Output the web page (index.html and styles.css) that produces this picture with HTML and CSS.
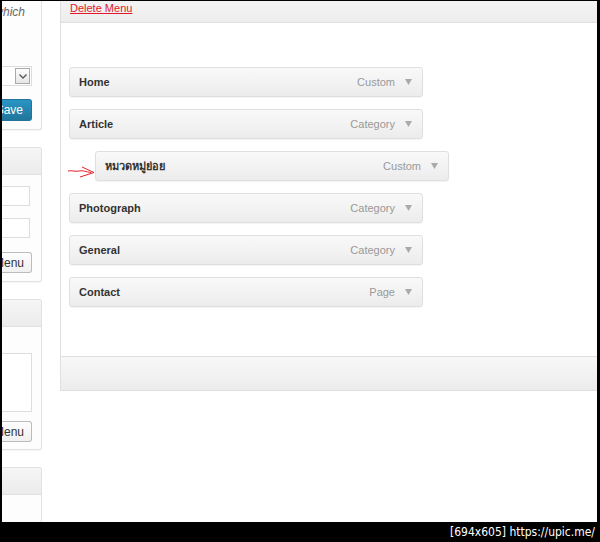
FILE: index.html
```html
<!DOCTYPE html>
<html lang="en">
<head>
    <meta charset="UTF-8">
    <meta name="viewport" content="width=device-width, initial-scale=1.0">
    <title>Menus</title>
    <link rel="stylesheet" href="styles.css">
</head>
<body>
    <div class="screen">
        <div class="shot">
            <div class="sidebar">
                <div class="panel panel-first">
                    <p class="hint">which</p>
                    <div class="select">
                        <span class="select-arrow">
                            <svg width="8" height="5" viewBox="0 0 8 5"><polyline points="0.5,0.5 4,4 7.5,0.5" fill="none" stroke="#555" stroke-width="1.3"/></svg>
                        </span>
                    </div>
                    <button class="btn-primary">Save</button>
                </div>

                <div class="panel panel-links">
                    <div class="panel-head"></div>
                    <div class="panel-body">
                        <div class="field"></div>
                        <div class="field field-gap"></div>
                        <button class="btn">Add to Menu</button>
                    </div>
                </div>

                <div class="panel panel-cats">
                    <div class="panel-head"></div>
                    <div class="panel-body">
                        <div class="textarea"></div>
                        <button class="btn">Add to Menu</button>
                    </div>
                </div>

                <div class="panel panel-last">
                    <div class="panel-head"></div>
                </div>
            </div>

            <div class="main">
                <div class="main-top">
                    <a href="#" class="delete-link">Delete Menu</a>
                </div>
                <div class="main-body">
                    <div class="menu-item">
                        <span class="item-title">Home</span>
                        <span class="item-type">Custom</span>
                        <svg class="item-arrow" width="7" height="6" viewBox="0 0 7 6"><polygon points="0,0 7,0 3.5,6" fill="#aaa"/></svg>
                    </div>
                    <div class="menu-item">
                        <span class="item-title">Article</span>
                        <span class="item-type">Category</span>
                        <svg class="item-arrow" width="7" height="6" viewBox="0 0 7 6"><polygon points="0,0 7,0 3.5,6" fill="#aaa"/></svg>
                    </div>
                    <div class="menu-item sub-item">
                        <span class="item-title">หมวดหมู่ย่อย</span>
                        <span class="item-type">Custom</span>
                        <svg class="item-arrow" width="7" height="6" viewBox="0 0 7 6"><polygon points="0,0 7,0 3.5,6" fill="#aaa"/></svg>
                    </div>
                    <div class="menu-item">
                        <span class="item-title">Photograph</span>
                        <span class="item-type">Category</span>
                        <svg class="item-arrow" width="7" height="6" viewBox="0 0 7 6"><polygon points="0,0 7,0 3.5,6" fill="#aaa"/></svg>
                    </div>
                    <div class="menu-item">
                        <span class="item-title">General</span>
                        <span class="item-type">Category</span>
                        <svg class="item-arrow" width="7" height="6" viewBox="0 0 7 6"><polygon points="0,0 7,0 3.5,6" fill="#aaa"/></svg>
                    </div>
                    <div class="menu-item">
                        <span class="item-title">Contact</span>
                        <span class="item-type">Page</span>
                        <svg class="item-arrow" width="7" height="6" viewBox="0 0 7 6"><polygon points="0,0 7,0 3.5,6" fill="#aaa"/></svg>
                    </div>

                    <!-- hand-drawn marker pointing at the sub item -->
                    <svg class="marker" width="32" height="16" viewBox="0 0 32 16">
                        <path d="M1 5 C5 4, 8 6, 12 5 C16 4, 19 6, 24 6.5" fill="none" stroke="#e8202c" stroke-width="1"/>
                        <path d="M15 1 L27 6.5 L13 11" fill="none" stroke="#e8202c" stroke-width="1"/>
                    </svg>
                </div>
                <div class="main-foot"></div>
            </div>
        </div>
        <div class="caption">[694x605] https://upic.me/</div>
    </div>
</body>
</html>
```

FILE: styles.css
```css
body {
    margin: 0;
    background-color: #000;
    font-family: 'Liberation Sans', Arial, sans-serif;
    font-size: 11px;
    color: #333;
}
.screen {
    width: 600px;
    height: 542px;
    display: flex;
    flex-direction: column;
}
.shot {
    margin: 1px 3px 0 2px;
    height: 521px;
    background-color: #fff;
    display: flex;
    gap: 18px;
    overflow: hidden;
}
.caption {
    height: 20px;
    line-height: 20px;
    text-align: right;
    padding-right: 5px;
    color: #fff;
    font-family: 'DejaVu Sans Condensed', 'DejaVu Sans', sans-serif;
    font-size: 12px;
}

/* left column, cut off by the screenshot */
.sidebar {
    width: 40px;
    flex-shrink: 0;
    display: flex;
    flex-direction: column;
    gap: 17px;
}
.panel {
    box-sizing: border-box;
    background-color: #fdfdfd;
    border: 1px solid #e2e2e2;
    border-left: none;
    border-radius: 0 3px 3px 0;
    box-shadow: 0 1px 1px rgba(0,0,0,0.04);
}
.panel-first {
    border-top: none;
    border-radius: 0 0 3px 0;
    padding: 3px 0 7px;
    height: 129px;
}
.hint {
    margin: 0;
    line-height: 16px;
    font-size: 12px;
    font-style: italic;
    color: #666;
    text-align: right;
    padding-right: 16px;
    white-space: nowrap;
    direction: rtl;
    overflow: hidden;
}
.select {
    box-sizing: border-box;
    margin-top: 46px;
    width: 30px;
    height: 20px;
    border: 1px solid #ddd;
    border-left: none;
    background-color: #fff;
    display: flex;
    justify-content: flex-end;
    align-items: center;
    padding-right: 1px;
}
.select-arrow {
    box-sizing: border-box;
    width: 15px;
    height: 16px;
    border: 1px solid #aaa;
    background: linear-gradient(#fdfdfd, #e6e6e6);
    display: flex;
    align-items: center;
    justify-content: center;
}
button {
    font-family: 'Liberation Sans', Arial, sans-serif;
    font-size: 12px;
    display: block;
    box-sizing: border-box;
    height: 21px;
    padding: 0 8px 0 0;
    border-radius: 0 3px 3px 0;
    text-align: right;
    white-space: nowrap;
    overflow: hidden;
    direction: rtl;
}
.btn-primary {
    margin-top: 13px;
    width: 30px;
    height: 22px;
    padding-right: 8px;
    color: #fff;
    border: 1px solid #21759b;
    border-left: none;
    background: linear-gradient(#2a95c5, #21759b);
}
.btn {
    width: 30px;
    color: #333;
    border: 1px solid #bbb;
    border-left: none;
    background: linear-gradient(#fefefe, #f0f0f0);
    padding-right: 7px;
}
.panel-head {
    height: 26px;
    border-bottom: 1px solid #dfdfdf;
    background: linear-gradient(#f5f5f5, #ececec);
    border-radius: 0 3px 0 0;
}
.panel-body {
    padding: 11px 0 8px;
}
.field {
    box-sizing: border-box;
    width: 28px;
    height: 20px;
    border: 1px solid #ddd;
    border-left: none;
    background-color: #fff;
}
.field-gap {
    margin-top: 12px;
}
.panel-links .btn {
    margin-top: 14px;
}
.panel-cats .panel-body {
    padding: 26px 0 7px;
}
.textarea {
    box-sizing: border-box;
    width: 30px;
    height: 59px;
    border: 1px solid #ddd;
    border-left: none;
    background-color: #fff;
}
.panel-cats .btn {
    margin-top: 9px;
}
.panel-last {
    flex: 1;
    border-bottom: none;
}

/* menu structure */
.main {
    flex: 1;
    border-left: 1px solid #dfdfdf;
    display: flex;
    flex-direction: column;
    align-self: flex-start;
}
.main-top {
    height: 21px;
    border-bottom: 1px solid #dfdfdf;
    background: linear-gradient(#f3f3f3, #ededed);
    padding-left: 9px;
    line-height: 14px;
}
.delete-link {
    color: #e3182b;
    font-size: 11px;
    text-decoration: underline;
    text-underline-offset: 1px;
}
.main-body {
    position: relative;
    padding: 44px 0 49px 8px;
    display: flex;
    flex-direction: column;
    gap: 12px;
}
.menu-item {
    box-sizing: border-box;
    width: 354px;
    height: 30px;
    display: flex;
    align-items: center;
    padding: 0 10px 0 9px;
    border: 1px solid #dfdfdf;
    border-radius: 3px;
    background: linear-gradient(#f9f9f9, #ececec);
    box-shadow: 0 1px 1px rgba(0,0,0,0.05);
}
.sub-item {
    margin-left: 26px;
}
.item-title {
    flex: 1;
    font-weight: bold;
    color: #333;
}
.item-type {
    color: #999;
    margin-right: 10px;
}
.item-arrow {
    display: block;
}
.marker {
    position: absolute;
    left: 6px;
    top: 143px;
}
.main-foot {
    height: 33px;
    border-top: 1px solid #dfdfdf;
    border-bottom: 1px solid #dfdfdf;
    background: linear-gradient(#f8f8f8, #ececec);
}
```
